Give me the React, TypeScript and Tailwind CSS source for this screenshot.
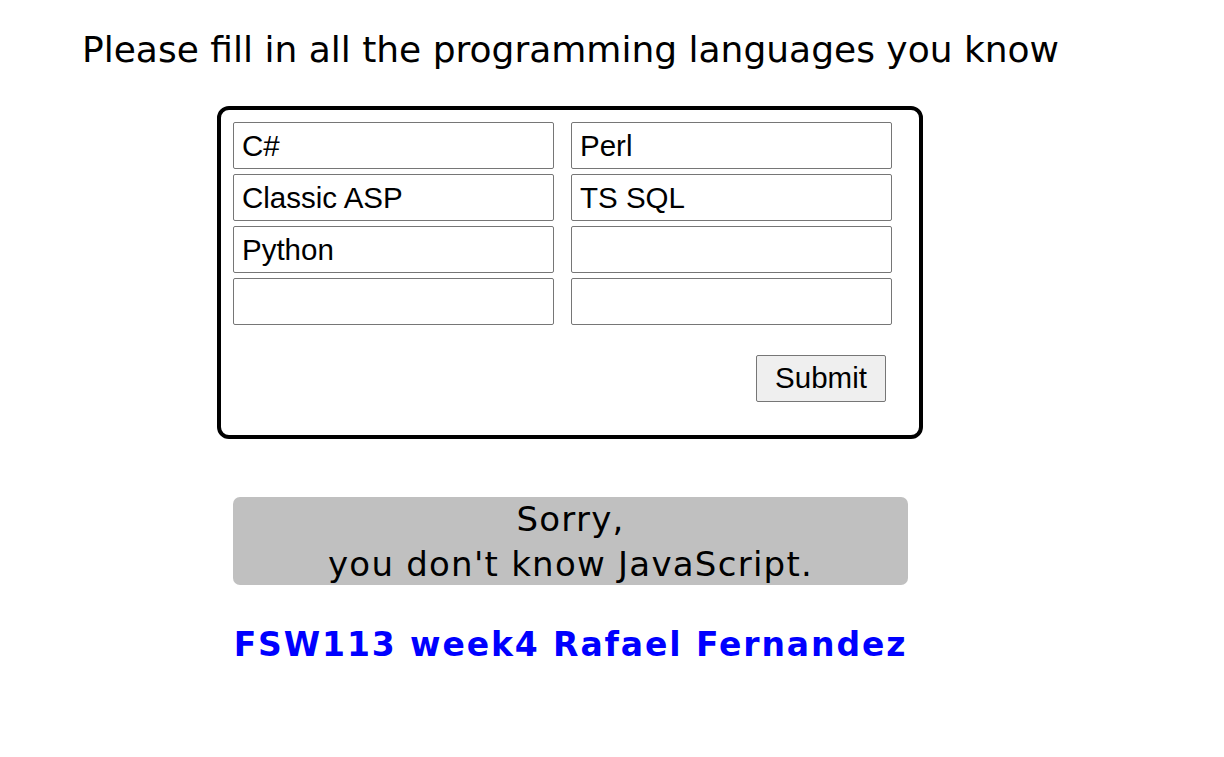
import { useState } from 'react'

const initial = ['C#', 'Perl', 'Classic ASP', 'TS SQL', 'Python', '', '', '']

export default function App() {
  const [langs, setLangs] = useState(initial)

  return (
    <div className="min-h-[757px] bg-white text-black">
      {/* heading */}
      <h1 className="pl-[82px] pt-[29px] text-[36px] leading-[42px] font-normal font-['DejaVu_Sans',Verdana,sans-serif]">
        Please fill in all the programming languages you know
      </h1>

      {/* form box */}
      <form
        className="ml-[217px] mt-[35px] w-[706px] rounded-[12px] border-4 border-black pt-[12px] pl-[12px] pb-[33px]"
        onSubmit={(e) => e.preventDefault()}
      >
        <div className="grid grid-cols-[321px_321px] gap-x-[17px] gap-y-[5px]">
          {langs.map((lang, i) => (
            <input
              key={i}
              value={lang}
              onChange={(e) => {
                const next = [...langs]
                next[i] = e.target.value
                setLangs(next)
              }}
              className="h-[47px] rounded-[2px] border border-[#767676] px-[8px] text-[29.5px] font-['Liberation_Sans',Arial,sans-serif] outline-none"
            />
          ))}
        </div>
        <div className="mt-[30px] flex w-[653px] justify-end">
          <button
            type="submit"
            className="h-[47px] w-[130px] rounded-[2px] border border-[#767676] bg-[#efefef] text-[29.5px] font-['Liberation_Sans',Arial,sans-serif]"
          >
            Submit
          </button>
        </div>
      </form>

      {/* result */}
      <div className="ml-[233px] mt-[58px] h-[88px] w-[675px] rounded-[7px] bg-[#c0c0c0] text-center text-[34px] leading-[45px] tracking-[1.25px] font-['DejaVu_Sans',Tahoma,sans-serif]">
        Sorry,
        <br />
        you don't know JavaScript.
      </div>

      <h2 className="ml-[233px] mt-[41px] w-[675px] text-center text-[33px] leading-[38px] tracking-[1.9px] font-bold text-[#0000ff] font-['DejaVu_Sans',Tahoma,sans-serif]">
        FSW113 week4 Rafael Fernandez
      </h2>
    </div>
  )
}
